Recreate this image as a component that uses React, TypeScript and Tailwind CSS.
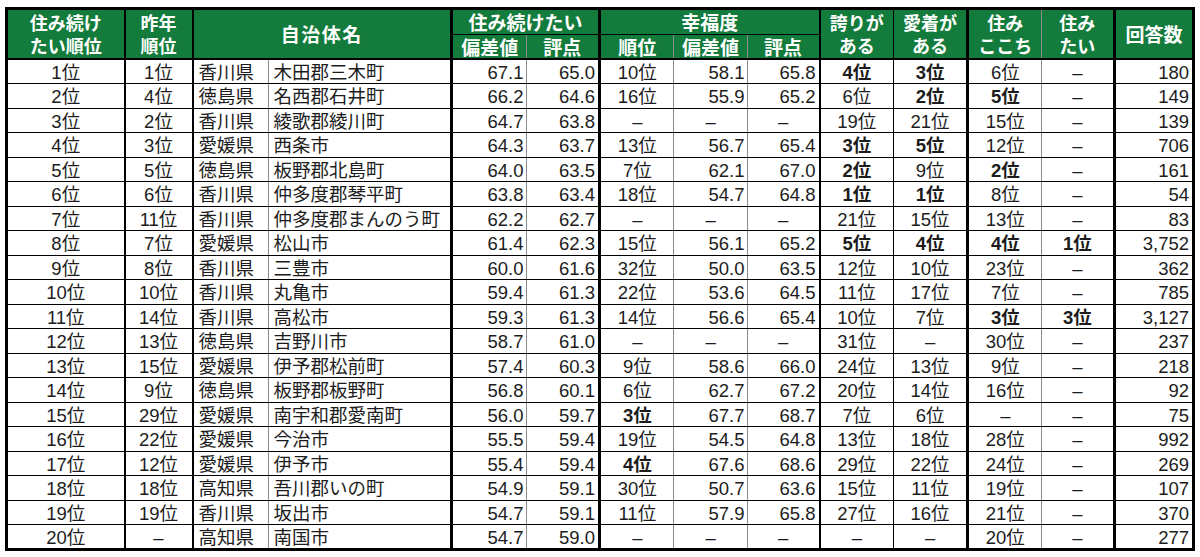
import React from 'react';

type Align = 'left' | 'center' | 'right';
type Edge = 'thin' | 'med' | 'thick' | 'dot';

// column widths and right-hand borders, left to right
const cols: { w: string; align: Align; edge: Edge }[] = [
  { w: 'w-[118px]', align: 'center', edge: 'med' },
  { w: 'w-[68px]', align: 'center', edge: 'med' },
  { w: 'w-[76px]', align: 'left', edge: 'dot' },
  { w: 'w-[183px]', align: 'left', edge: 'thick' },
  { w: 'w-[75px]', align: 'right', edge: 'dot' },
  { w: 'w-[73px]', align: 'right', edge: 'thick' },
  { w: 'w-[74px]', align: 'center', edge: 'dot' },
  { w: 'w-[74px]', align: 'right', edge: 'dot' },
  { w: 'w-[72px]', align: 'right', edge: 'med' },
  { w: 'w-[74px]', align: 'center', edge: 'thin' },
  { w: 'w-[74px]', align: 'center', edge: 'thick' },
  { w: 'w-[74px]', align: 'center', edge: 'dot' },
  { w: 'w-[73px]', align: 'center', edge: 'thick' },
  { w: 'w-[79px]', align: 'right', edge: 'thick' },
];

// dotted separators: a thin grey inner line on the right edge
const edgeClass: Record<Edge, string> = {
  thin: 'border-r border-r-black',
  med: 'border-r-2 border-r-black',
  thick: 'border-r-[3px] border-r-black',
  dot: 'shadow-[inset_-1px_0_0_#8c8c8c]',
};

const alignClass: Record<Align, string> = {
  left: 'text-left pl-[5px]',
  center: 'text-center',
  right: 'text-right pr-[3px]',
};

// "*" prefix marks a bold cell
const rows: string[][] = [
  ['1位', '1位', '香川県', '木田郡三木町', '67.1', '65.0', '10位', '58.1', '65.8', '*4位', '*3位', '6位', '–', '180'],
  ['2位', '4位', '徳島県', '名西郡石井町', '66.2', '64.6', '16位', '55.9', '65.2', '6位', '*2位', '*5位', '–', '149'],
  ['3位', '2位', '香川県', '綾歌郡綾川町', '64.7', '63.8', '–', '–', '–', '19位', '21位', '15位', '–', '139'],
  ['4位', '3位', '愛媛県', '西条市', '64.3', '63.7', '13位', '56.7', '65.4', '*3位', '*5位', '12位', '–', '706'],
  ['5位', '5位', '徳島県', '板野郡北島町', '64.0', '63.5', '7位', '62.1', '67.0', '*2位', '9位', '*2位', '–', '161'],
  ['6位', '6位', '香川県', '仲多度郡琴平町', '63.8', '63.4', '18位', '54.7', '64.8', '*1位', '*1位', '8位', '–', '54'],
  ['7位', '11位', '香川県', '仲多度郡まんのう町', '62.2', '62.7', '–', '–', '–', '21位', '15位', '13位', '–', '83'],
  ['8位', '7位', '愛媛県', '松山市', '61.4', '62.3', '15位', '56.1', '65.2', '*5位', '*4位', '*4位', '*1位', '3,752'],
  ['9位', '8位', '香川県', '三豊市', '60.0', '61.6', '32位', '50.0', '63.5', '12位', '10位', '23位', '–', '362'],
  ['10位', '10位', '香川県', '丸亀市', '59.4', '61.3', '22位', '53.6', '64.5', '11位', '17位', '7位', '–', '785'],
  ['11位', '14位', '香川県', '高松市', '59.3', '61.3', '14位', '56.6', '65.4', '10位', '7位', '*3位', '*3位', '3,127'],
  ['12位', '13位', '徳島県', '吉野川市', '58.7', '61.0', '–', '–', '–', '31位', '–', '30位', '–', '237'],
  ['13位', '15位', '愛媛県', '伊予郡松前町', '57.4', '60.3', '9位', '58.6', '66.0', '24位', '13位', '9位', '–', '218'],
  ['14位', '9位', '徳島県', '板野郡板野町', '56.8', '60.1', '6位', '62.7', '67.2', '20位', '14位', '16位', '–', '92'],
  ['15位', '29位', '愛媛県', '南宇和郡愛南町', '56.0', '59.7', '*3位', '67.7', '68.7', '7位', '6位', '–', '–', '75'],
  ['16位', '22位', '愛媛県', '今治市', '55.5', '59.4', '19位', '54.5', '64.8', '13位', '18位', '28位', '–', '992'],
  ['17位', '12位', '愛媛県', '伊予市', '55.4', '59.4', '*4位', '67.6', '68.6', '29位', '22位', '24位', '–', '269'],
  ['18位', '18位', '高知県', '吾川郡いの町', '54.9', '59.1', '30位', '50.7', '63.6', '15位', '11位', '19位', '–', '107'],
  ['19位', '19位', '香川県', '坂出市', '54.7', '59.1', '11位', '57.9', '65.8', '27位', '16位', '21位', '–', '370'],
  ['20位', '–', '高知県', '南国市', '54.7', '59.0', '–', '–', '–', '–', '–', '20位', '–', '277'],
];

const th = 'bg-[#137b3b] text-white font-bold text-[18px] leading-[23.5px] text-center align-middle p-0';

export default function App() {
  return (
    <div className="w-[1200px] h-[557px] bg-white pl-[5px] pt-[7px] font-['Liberation_Sans','Noto_Sans_CJK_JP',sans-serif] text-[#1c1c1c]">
      <table className="table-fixed border-collapse w-[1187px] border-[3px] border-black">
        <colgroup>
          {cols.map((c, i) => (
            <col key={i} className={c.w} />
          ))}
        </colgroup>
        <thead className="font-['Noto_Sans_CJK_JP',sans-serif]">
          <tr className="h-[24px]">
            <th rowSpan={2} className={`${th} border-r-2 border-r-black border-b-2 border-b-black`}>
              住み続け<br />たい順位
            </th>
            <th rowSpan={2} className={`${th} border-r-2 border-r-black border-b-2 border-b-black`}>
              昨年<br />順位
            </th>
            <th rowSpan={2} colSpan={2} className={`${th} text-[19px] tracking-[1.5px] border-r-[3px] border-r-black border-b-2 border-b-black`}>
              自治体名
            </th>
            <th colSpan={2} className={`${th} text-[19px] border-r-[3px] border-r-black border-b border-b-black`}>
              住み続けたい
            </th>
            <th colSpan={3} className={`${th} text-[19px] border-r-2 border-r-black border-b border-b-black`}>
              幸福度
            </th>
            <th rowSpan={2} className={`${th} border-r border-r-black border-b-2 border-b-black`}>
              誇りが<br />ある
            </th>
            <th rowSpan={2} className={`${th} border-r-[3px] border-r-black border-b-2 border-b-black`}>
              愛着が<br />ある
            </th>
            <th rowSpan={2} className={`${th} ${edgeClass.dot} border-b-2 border-b-black`}>
              住み<br />ここち
            </th>
            <th rowSpan={2} className={`${th} border-r-[3px] border-r-black border-b-2 border-b-black`}>
              住み<br />たい
            </th>
            <th rowSpan={2} className={`${th} text-[19px] border-r-[3px] border-r-black border-b-2 border-b-black`}>
              回答数
            </th>
          </tr>
          <tr className="h-[24px]">
            <th className={`${th} text-[19px] ${edgeClass.dot} border-b-2 border-b-black`}>偏差値</th>
            <th className={`${th} text-[19px] border-r-[3px] border-r-black border-b-2 border-b-black`}>評点</th>
            <th className={`${th} text-[19px] ${edgeClass.dot} border-b-2 border-b-black`}>順位</th>
            <th className={`${th} text-[19px] ${edgeClass.dot} border-b-2 border-b-black`}>偏差値</th>
            <th className={`${th} text-[19px] border-r-2 border-r-black border-b-2 border-b-black`}>評点</th>
          </tr>
        </thead>
        <tbody>
          {rows.map((row, ri) => (
            <tr key={ri} className="h-[24.5px]">
              {row.map((cell, ci) => {
                const bold = cell.startsWith('*');
                const text = bold ? cell.slice(1) : cell;
                const align = text === '–' ? alignClass.center : alignClass[cols[ci].align];
                return (
                  <td
                    key={ci}
                    className={`p-0 pt-[2px] text-[18.5px] leading-[21px] whitespace-nowrap overflow-hidden border-b border-b-black ${edgeClass[cols[ci].edge]} ${align} ${bold ? 'font-bold' : 'font-normal'}`}
                  >
                    {text}
                  </td>
                );
              })}
            </tr>
          ))}
        </tbody>
      </table>
    </div>
  );
}
